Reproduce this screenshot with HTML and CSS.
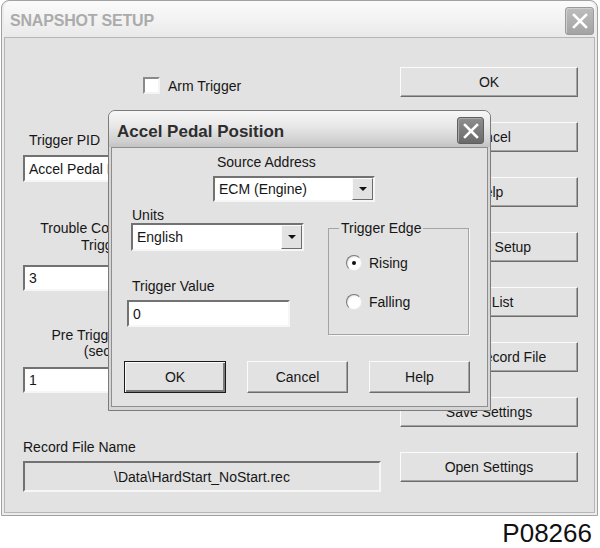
FILE: index.html
```
<!DOCTYPE html>
<html>
<head>
<meta charset="utf-8">
<link rel="stylesheet" href="styles.css">
</head>
<body>
<div class="screen">
  <div class="window">
    <div class="titlebar">
      <span class="title">SNAPSHOT SETUP</span>
      <span class="close close-light"><svg width="18" height="18" viewBox="0 0 18 18"><path d="M3 3 L15 15 M15 3 L3 15" stroke="#fff" stroke-width="2.6" stroke-linecap="square"/></svg></span>
    </div>
    <div class="client">
      <div class="leftcol">
        <div class="arm"><span class="checkbox"></span><span>Arm Trigger</span></div>
        <div class="lbl pid-lbl">Trigger PID</div>
        <div class="field f-pid">Accel Pedal Position</div>
        <div class="lbl trouble">Trouble Code Count<br>Trigger</div>
        <div class="field f-trouble">3</div>
        <div class="lbl pre">Pre Trigger Duration<br>(seconds)</div>
        <div class="field f-pre">1</div>
        <div class="lbl rec-lbl">Record File Name</div>
        <div class="field rec-field">\Data\HardStart_NoStart.rec</div>
      </div>
      <div class="rightcol">
        <div class="btn">OK</div>
        <div class="btn">Cancel</div>
        <div class="btn">Help</div>
        <div class="btn">Trigger Setup</div>
        <div class="btn">PID List</div>
        <div class="btn">Select Record File</div>
        <div class="btn">Save Settings</div>
        <div class="btn">Open Settings</div>
      </div>
    </div>
  </div>
  <div class="code">P08266</div>

  <div class="dlg">
    <div class="dlg-title">
      <span class="dlg-name">Accel Pedal Position</span>
      <span class="close close-dark"><svg width="18" height="18" viewBox="0 0 18 18"><path d="M3 3 L15 15 M15 3 L3 15" stroke="#fff" stroke-width="2.6" stroke-linecap="square"/></svg></span>
    </div>
    <div class="dlg-body">
      <div class="dlg-client">
        <div class="src">
          <div class="lbl src-lbl">Source Address</div>
          <div class="combo c-src"><span class="combo-text">ECM (Engine)</span><span class="arrow"></span></div>
        </div>
        <div class="row2">
          <div class="col-l">
            <div class="lbl units-lbl">Units</div>
            <div class="combo c-units"><span class="combo-text">English</span><span class="arrow"></span></div>
            <div class="lbl tv-lbl">Trigger Value</div>
            <div class="field f-tv">0</div>
          </div>
          <fieldset class="edge">
            <legend>Trigger Edge</legend>
            <div class="radio r1"><span class="dot on"></span><span>Rising</span></div>
            <div class="radio r2"><span class="dot"></span><span>Falling</span></div>
          </fieldset>
        </div>
        <div class="dlg-btns">
          <div class="btn dbtn default">OK</div>
          <div class="btn dbtn">Cancel</div>
          <div class="btn dbtn">Help</div>
        </div>
      </div>
    </div>
  </div>
</div>
</body>
</html>
```
FILE: styles.css
```
* { box-sizing: border-box; }
body {
  margin: 0;
  background: #fff;
  font-family: "Liberation Sans", Arial, sans-serif;
  font-size: 14px;
  color: #161616;
}
.screen { position: relative; width: 600px; height: 548px; overflow: hidden; }

.window {
  margin-left: 1px;
  width: 597px;
  height: 516px;
  border: 1px solid #a2a2a2;
  border-radius: 8px 8px 0 0;
  background: #ececec;
  padding: 0 2px 2px;
  display: flex;
  flex-direction: column;
}
.titlebar {
  height: 36px;
  flex: none;
  display: flex;
  align-items: flex-start;
  justify-content: space-between;
  padding: 0 1px 0 6px;
  background: linear-gradient(#fbfbfb, #f1f1f1 60%, #e9e9e9);
  border-radius: 7px 7px 0 0;
}
.title {
  margin-top: 11px;
  font-size: 16px;
  line-height: 18px;
  font-weight: bold;
  color: #ababab;
  letter-spacing: -0.2px;
}
.close {
  display: flex;
  align-items: center;
  justify-content: center;
  border-radius: 3px;
}
.close-light {
  margin-top: 6px;
  width: 29px;
  height: 28px;
  background: linear-gradient(#bdbdbd, #a3a3a3);
  border: 1px solid #9a9a9a;
  box-shadow: inset 1px 1px #cfcfcf;
}
.close-dark {
  margin-top: 6px;
  width: 27px;
  height: 27px;
  background: linear-gradient(#8e8e8e, #6a6a6a);
  border: 1px solid #5e5e5e;
  box-shadow: inset 1px 1px #a8a8a8;
}

.client {
  flex: 1;
  border: 1px solid #b6b6b6;
  background: #e2e2e2;
  display: flex;
}
.leftcol {
  width: 376px;
  padding-left: 18px;
  display: flex;
  flex-direction: column;
  align-items: flex-start;
}
.rightcol {
  margin-left: 19px;
  width: 178px;
  padding-top: 29px;
  display: flex;
  flex-direction: column;
  gap: 25px;
}
.lbl { line-height: 16px; white-space: nowrap; }

.arm {
  margin-top: 39px;
  padding-left: 120px;
  height: 17px;
  display: flex;
  align-items: center;
  gap: 8px;
}
.checkbox {
  width: 17px;
  height: 17px;
  background: #fff;
  border: 2px solid;
  border-color: #8a8a8a #f4f4f4 #f4f4f4 #8a8a8a;
}
.field {
  background: #fff;
  border: 2px solid;
  border-color: #727272 #f6f6f6 #f6f6f6 #727272;
  padding-left: 4px;
  display: flex;
  align-items: center;
  white-space: nowrap;
  overflow: hidden;
}
.pid-lbl { margin-top: 38px; padding-left: 6px; }
.f-pid { margin-top: 7px; height: 27px; width: 200px; }
.trouble { margin-top: 38px; width: 160px; text-align: center; line-height: 17px; }
.f-trouble { margin-top: 11px; height: 26px; width: 200px; }
.pre { margin-top: 36px; width: 183px; text-align: center; }
.f-pre { margin-top: 8px; height: 26px; width: 200px; }
.rec-lbl { margin-top: 46px; }
.rec-field {
  margin-top: 6px;
  width: 358px;
  height: 31px;
  background: #e2e2e2;
  justify-content: center;
  padding-left: 0;
}

.btn {
  height: 30px;
  background: #e2e2e2;
  border: 1px solid;
  border-color: #fbfbfb #6c6c6c #6c6c6c #fbfbfb;
  box-shadow: inset -1px -1px #a3a3a3;
  display: flex;
  align-items: center;
  justify-content: center;
  white-space: nowrap;
}

.code {
  width: 600px;
  text-align: right;
  padding: 3px 8px 0 0;
  font-size: 26px;
  line-height: 29px;
  color: #111;
}

/* dialog */
.dlg {
  position: absolute;
  left: 108px;
  top: 110px;
  width: 383px;
  height: 301px;
  border: 1px solid #7b7b7b;
  border-radius: 7px 7px 0 0;
  background: #d6d6d6;
  display: flex;
  flex-direction: column;
}
.dlg-title {
  height: 36px;
  flex: none;
  display: flex;
  align-items: flex-start;
  justify-content: space-between;
  padding: 0 6px 0 8px;
  background: linear-gradient(#f7f7f7, #e6e6e6 45%, #cfcfcf 85%, #c2c2c2);
  border-radius: 6px 6px 0 0;
}
.dlg-name {
  margin-top: 11px;
  font-size: 17px;
  line-height: 20px;
  font-weight: bold;
  color: #2e2e2e;
}
.dlg-body {
  flex: 1;
  padding: 0 2px 3px;
  display: flex;
}
.dlg-client {
  flex: 1;
  border: 1px solid #8e8e8e;
  background: #e2e2e2;
  display: flex;
  flex-direction: column;
}
.src { padding-top: 6px; display: flex; flex-direction: column; }
.src-lbl { margin-left: 105px; }
.combo {
  display: flex;
  align-items: stretch;
  background: #fff;
  border: 2px solid;
  border-color: #727272 #f6f6f6 #f6f6f6 #727272;
}
.combo-text { flex: 1; padding-left: 4px; display: flex; align-items: center; }
.arrow {
  width: 21px;
  background: #e2e2e2;
  border: 1px solid;
  border-color: #fbfbfb #6c6c6c #6c6c6c #fbfbfb;
  position: relative;
}
.arrow::after {
  content: "";
  position: absolute;
  left: 50%;
  top: 50%;
  margin-left: -4px;
  margin-top: -2px;
  border-left: 4px solid transparent;
  border-right: 4px solid transparent;
  border-top: 4px solid #111;
}
.c-src { margin-top: 6px; margin-left: 101px; width: 162px; height: 26px; }
.row2 { display: flex; align-items: flex-start; }
.col-l { width: 196px; display: flex; flex-direction: column; align-items: flex-start; }
.units-lbl { margin-top: 5px; margin-left: 20px; }
.c-units { margin-left: 19px; width: 173px; height: 28px; }
.tv-lbl { margin-top: 27px; margin-left: 20px; }
.f-tv { margin-top: 6px; margin-left: 15px; width: 163px; height: 27px; }
.edge {
  margin: 18px 0 0 20px;
  width: 141px;
  height: 115px;
  padding: 0 0 0 10px;
  border: 1px solid #a4a4a4;
  box-shadow: 1px 1px #f7f7f7;
  min-width: 0;
}
.edge legend { padding: 0 2px; line-height: 16px; }
.radio { display: flex; align-items: center; gap: 7px; margin-left: 7px; height: 16px; }
.r1 { margin-top: 19px; }
.r2 { margin-top: 23px; }
.dot {
  width: 16px;
  height: 16px;
  border-radius: 50%;
  background: radial-gradient(circle at 60% 60%, #fff 55%, #e6e6e6 70%);
  border: 1px solid;
  border-color: #7a7a7a #e8e8e8 #e8e8e8 #7a7a7a;
  position: relative;
}
.dot.on::after {
  content: "";
  position: absolute;
  left: 5px;
  top: 5px;
  width: 4px;
  height: 4px;
  border-radius: 50%;
  background: #111;
}
.dlg-btns { margin-top: 26px; padding-left: 12px; display: flex; gap: 21px; }
.dbtn { height: 32px; width: 101px; }
.dbtn.default {
  width: 102px;
  border: 1px solid #1a1a1a;
  box-shadow: inset 1px 1px #fbfbfb, inset -2px -2px #7a7a7a;
}
```
